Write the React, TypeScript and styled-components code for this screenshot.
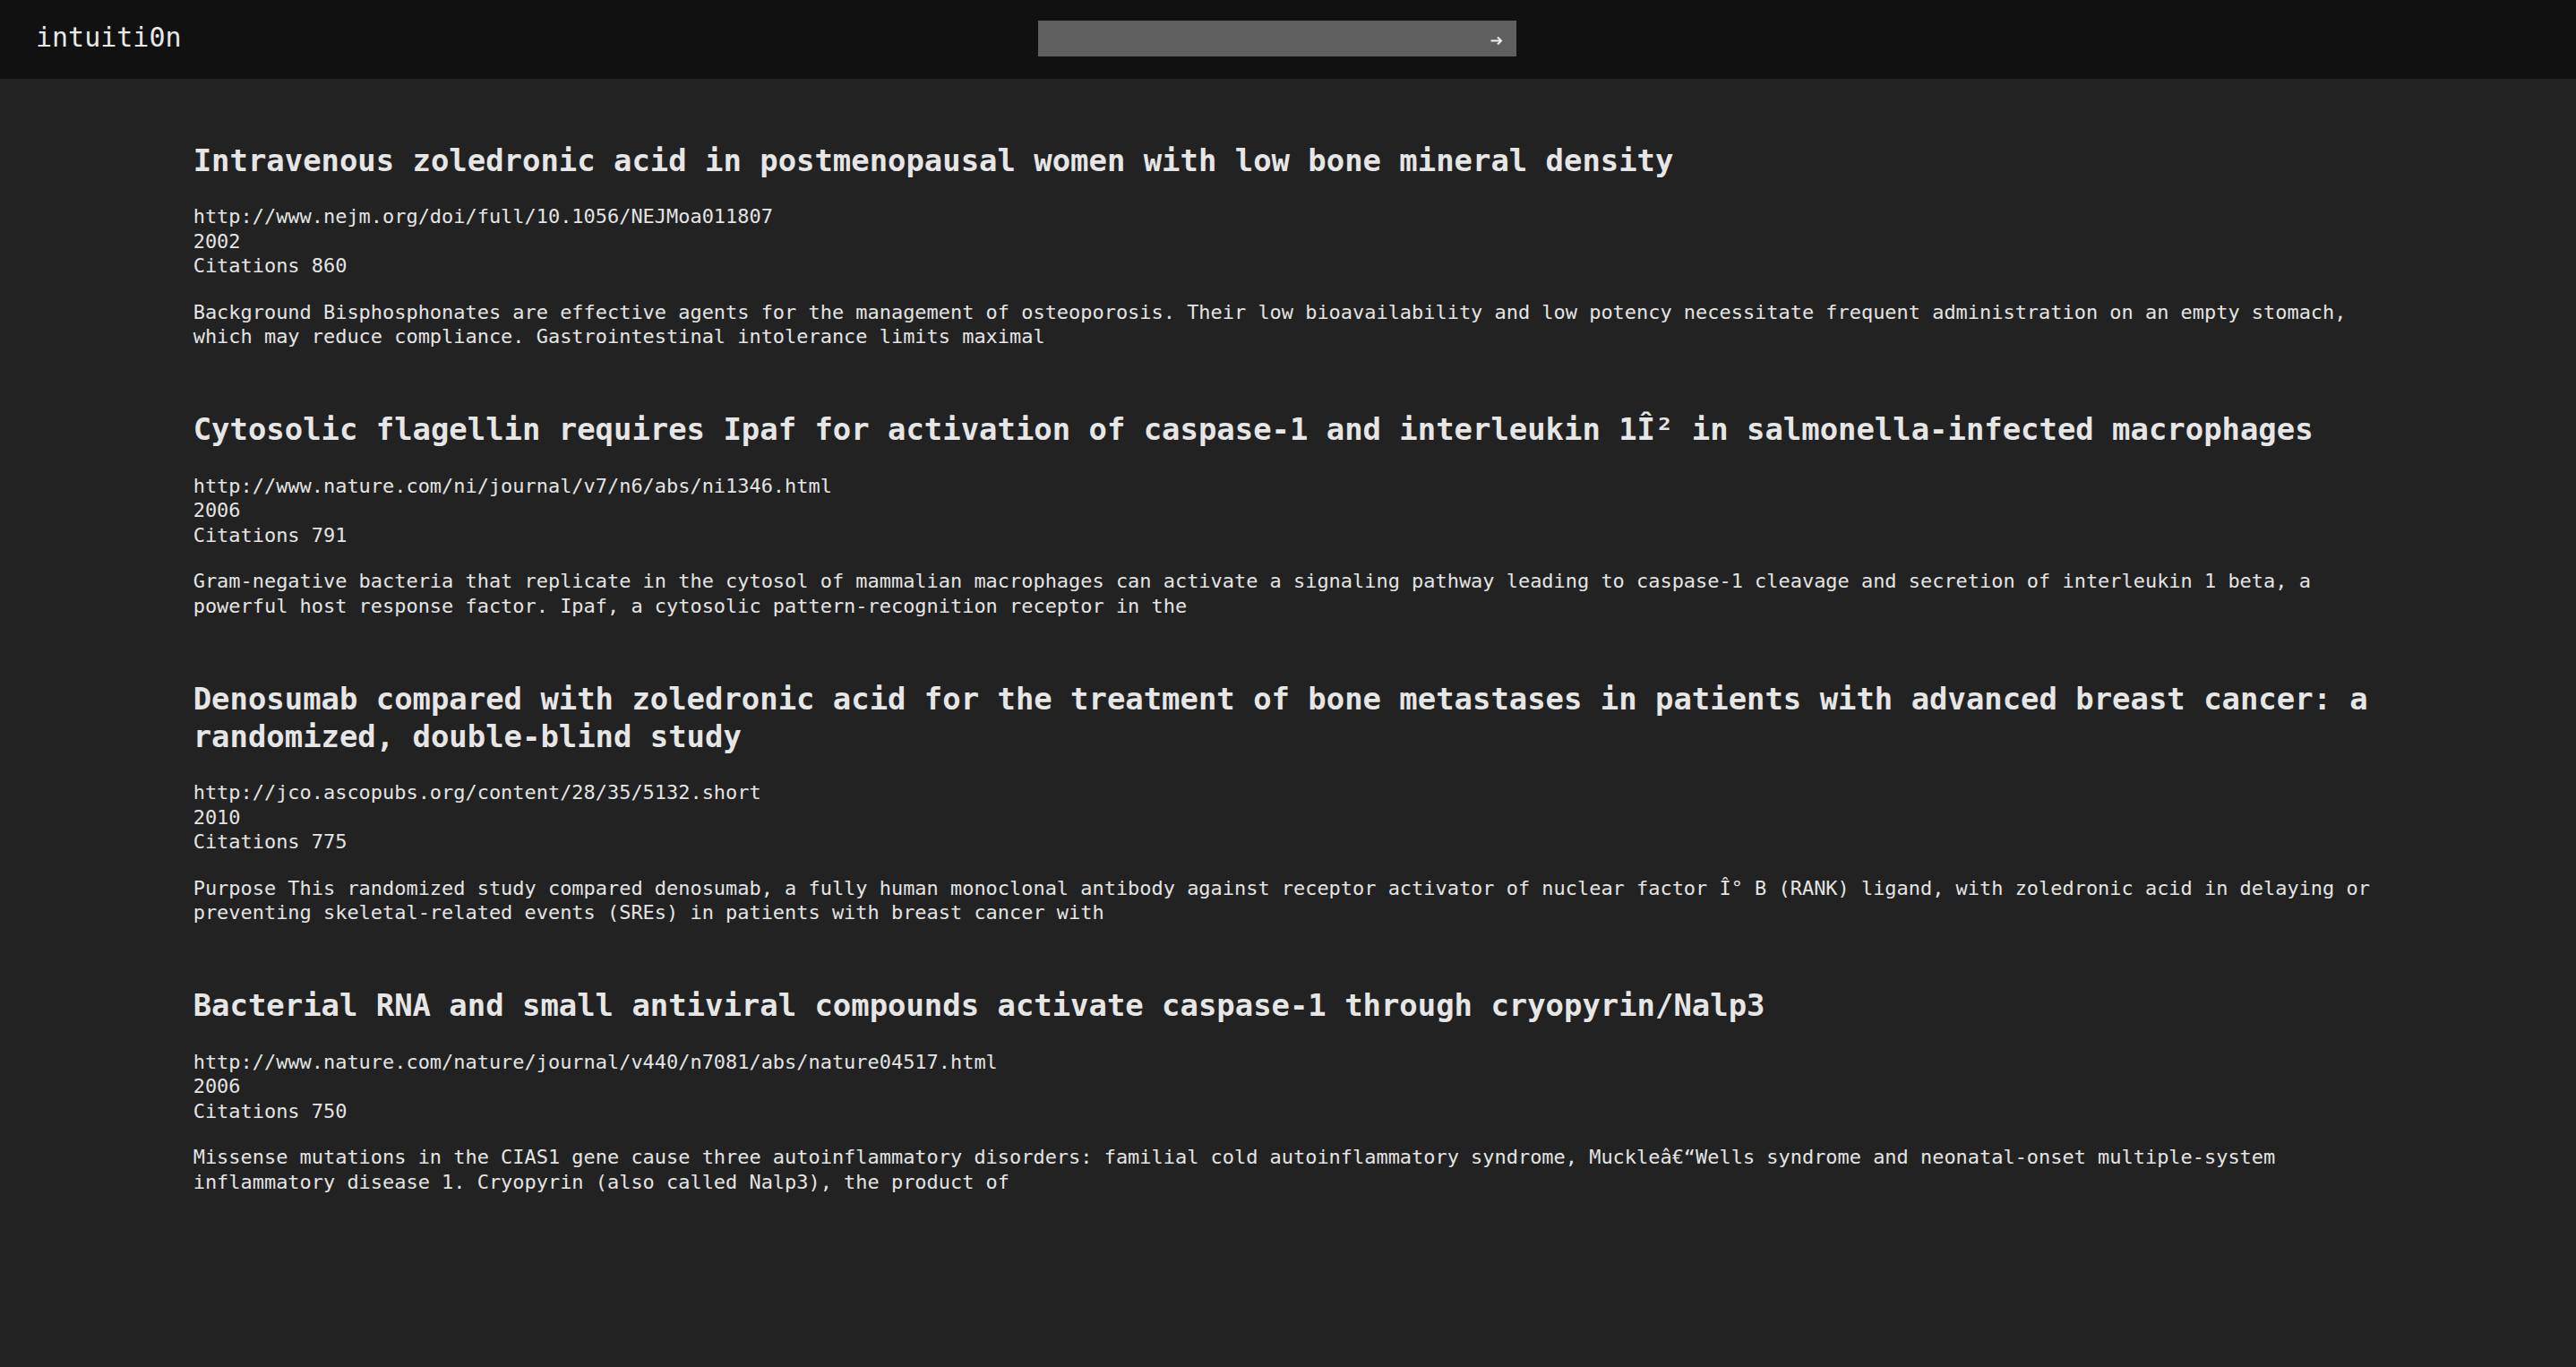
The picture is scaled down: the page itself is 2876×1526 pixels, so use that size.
import React from 'react'
import styled, { createGlobalStyle } from 'styled-components'

const GlobalStyle = createGlobalStyle`
    html, body {
        margin: 0;
        padding: 0;
        background: #222222;
        color: #e4e4e4;
        font-family: "DejaVu Sans Mono", "Liberation Mono", monospace;
    }
    #root {
        min-height: 100vh;
        background: #222222;
    }
`

type Article = {
    title: string
    url: string
    year: number
    citations: number
    abstract: string
}

const articles: Article[] = [
    {
        title: "Intravenous zoledronic acid in postmenopausal women with low bone mineral density",
        url: "http://www.nejm.org/doi/full/10.1056/NEJMoa011807",
        year: 2002,
        citations: 860,
        abstract: "Background Bisphosphonates are effective agents for the management of osteoporosis. Their low bioavailability and low potency necessitate frequent administration on an empty stomach, which may reduce compliance. Gastrointestinal intolerance limits maximal",
    },
    {
        title: "Cytosolic flagellin requires Ipaf for activation of caspase-1 and interleukin 1Î² in salmonella-infected macrophages",
        url: "http://www.nature.com/ni/journal/v7/n6/abs/ni1346.html",
        year: 2006,
        citations: 791,
        abstract: "Gram-negative bacteria that replicate in the cytosol of mammalian macrophages can activate a signaling pathway leading to caspase-1 cleavage and secretion of interleukin 1 beta, a powerful host response factor. Ipaf, a cytosolic pattern-recognition receptor in the",
    },
    {
        title: "Denosumab compared with zoledronic acid for the treatment of bone metastases in patients with advanced breast cancer: a randomized, double-blind study",
        url: "http://jco.ascopubs.org/content/28/35/5132.short",
        year: 2010,
        citations: 775,
        abstract: "Purpose This randomized study compared denosumab, a fully human monoclonal antibody against receptor activator of nuclear factor Î° B (RANK) ligand, with zoledronic acid in delaying or preventing skeletal-related events (SREs) in patients with breast cancer with",
    },
    {
        title: "Bacterial RNA and small antiviral compounds activate caspase-1 through cryopyrin/Nalp3",
        url: "http://www.nature.com/nature/journal/v440/n7081/abs/nature04517.html",
        year: 2006,
        citations: 750,
        abstract: "Missense mutations in the CIAS1 gene cause three autoinflammatory disorders: familial cold autoinflammatory syndrome, Muckleâ€“Wells syndrome and neonatal-onset multiple-system inflammatory disease 1. Cryopyrin (also called Nalp3), the product of",
    },
]

const App = () => {
  return (
    <>
      <GlobalStyle />
      <Header>
        <Logo>intuiti0n</Logo>
        <SearchForm onSubmit={(e) => e.preventDefault()}>
          <SearchInput type="text" aria-label="search" />
          <SearchButton type="submit" aria-label="go">
            <svg width="14" height="11" viewBox="0 0 14 11" fill="none" stroke="#f0f0f0" strokeWidth="2">
              <path d="M0.5 5.5H12" />
              <path d="M8 1.5L12 5.5L8 9.5" />
            </svg>
          </SearchButton>
        </SearchForm>
      </Header>
      <Main>
        {articles.map((a) => (
          <ArticleItem key={a.url}>
            <Title>{a.title}</Title>
            <Meta>
              <div>{a.url}</div>
              <div>{a.year}</div>
              <div>Citations {a.citations}</div>
            </Meta>
            <Abstract>{a.abstract}</Abstract>
          </ArticleItem>
        ))}
      </Main>
    </>
  )
}

const Header = styled.header`
    /* the search bar sits a little left of the page centre */
    height: 88px;
    background: #111111;
    display: grid;
    grid-template-columns: 1fr 534px 1fr;
    align-items: center;
    padding: 0 64px 0 40px;
`

const Logo = styled.div`
    justify-self: start;
    font-size: 30px;
    color: #e8e8e8;
    margin-top: -6px;
`

const SearchForm = styled.form`
    display: flex;
    align-items: center;
    height: 40px;
    margin-top: -2px;
    background: #5f5f5f;
`

const SearchInput = styled.input`
    flex: 1;
    height: 100%;
    border: none;
    outline: none;
    background: transparent;
    color: #eeeeee;
    font-family: inherit;
    font-size: 18px;
    padding: 0 12px;
`

const SearchButton = styled.button`
    width: 40px;
    height: 100%;
    border: none;
    background: transparent;
    display: flex;
    align-items: center;
    justify-content: center;
    padding: 0 4px 0 0;
    margin-top: 4px;
`

const Main = styled.main`
    width: 85%;
    margin: 0 auto;
    padding: 1px 0 60px;
`

const ArticleItem = styled.article`
    margin-top: 69.5px;
`

const Title = styled.h2`
    font-size: 33.9px;
    line-height: 42px;
    font-weight: 700;
    color: #e6e6e6;
    margin: 0 0 27.5px;
`

const Meta = styled.div`
    font-size: 21.95px;
    line-height: 27.5px;
    margin-bottom: 24px;
`

const Abstract = styled.p`
    font-size: 21.95px;
    line-height: 27.5px;
    margin: 0;
`

export default App
